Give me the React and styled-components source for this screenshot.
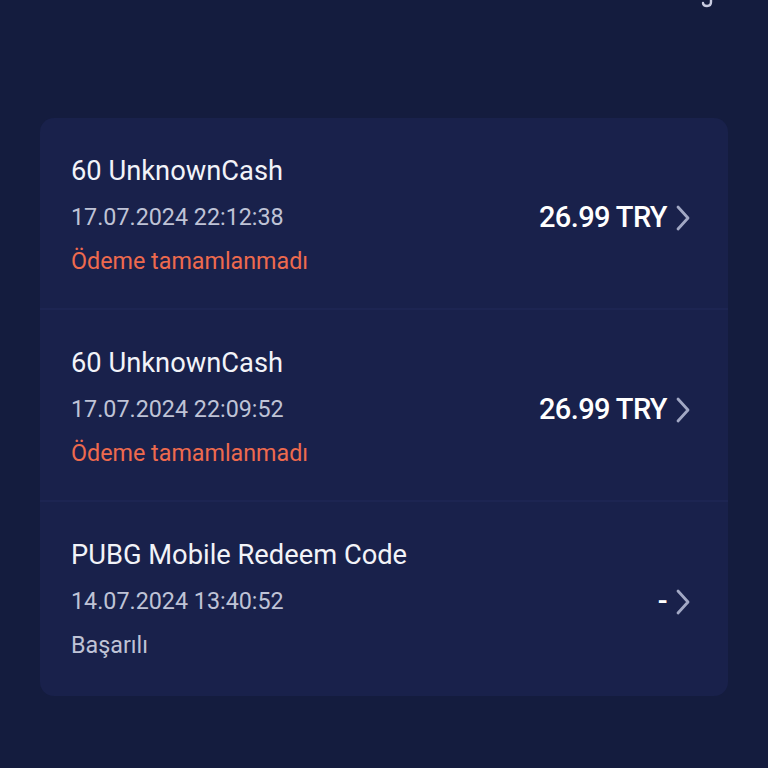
import styled, { createGlobalStyle } from "styled-components";

const Global = createGlobalStyle`
  html, body {
    margin: 0;
    padding: 0;
    background: #141c3e;
  }
  body {
    font-family: Roboto, "Noto Sans", sans-serif;
  }
`;

const Page = styled.div`
  width: 768px;
  height: 768px;
  overflow: hidden;
  background: #141c3e;
  display: flex;
  flex-direction: column;
`;

const Header = styled.div`
  height: 118px;
  display: flex;
  justify-content: flex-end;
  align-items: flex-start;
  padding-right: 54px;
`;

const HeaderIcon = styled.svg`
  margin-top: -14px;
`;

const Card = styled.div`
  margin: 0 40px;
  padding-bottom: 4px;
  background: #19214b;
  border-radius: 14px;
  overflow: hidden;
`;

const Row = styled.div`
  display: grid;
  grid-template-columns: 1fr auto;
  grid-template-rows: 46px 45px 44px;
  align-items: center;
  padding: 31px 37px 24px 31px;
  border-top: ${(p) => (p.$first ? "none" : "2px solid #1d2552")};
`;

const Title = styled.div`
  color: #f2f3f8;
  font-size: 27.3px;
  line-height: 1;
  grid-column: 1;
`;

const Date = styled.div`
  color: #bfc3d6;
  font-size: 23.3px;
  line-height: 1;
  grid-column: 1;
`;

const Status = styled.div`
  color: ${(p) => (p.$ok ? "#bfc3d6" : "#ee6a4e")};
  font-size: 23.3px;
  line-height: 1;
  grid-column: 1;
`;

const Side = styled.div`
  grid-column: 2;
  grid-row: 2;
  display: flex;
  align-items: center;
  gap: 8px;
`;

const Amount = styled.div`
  color: #ffffff;
  font-family: Roboto, sans-serif;
  font-weight: 500;
  font-size: 29px;
  letter-spacing: -0.6px;
  line-height: 1;
`;

const Chevron = () => (
  <svg width="16" height="28" viewBox="0 0 16 28">
    <path d="M3 3 L13 14 L3 25" fill="none" stroke="#a2a8c4" strokeWidth="2.8" strokeLinecap="round" strokeLinejoin="round" />
  </svg>
);

const orders = [
  { title: "60 UnknownCash", date: "17.07.2024 22:12:38", amount: "26.99 TRY", status: "Ödeme tamamlanmadı", ok: false },
  { title: "60 UnknownCash", date: "17.07.2024 22:09:52", amount: "26.99 TRY", status: "Ödeme tamamlanmadı", ok: false },
  { title: "PUBG Mobile Redeem Code", date: "14.07.2024 13:40:52", amount: "-", status: "Başarılı", ok: true },
];

export default function App() {
  return (
    <Page>
      <Global />
      <Header>
        <HeaderIcon width="14" height="22" viewBox="0 0 14 22">
          <path d="M11 4 L11 16 Q11 20 7 20 Q3 20 3 17" fill="none" stroke="#c8cbe0" strokeWidth="2.4" strokeLinecap="round" />
        </HeaderIcon>
      </Header>
      <Card>
        {orders.map((o, i) => (
          <Row key={i} $first={i === 0}>
            <Title>{o.title}</Title>
            <Date>{o.date}</Date>
            <Status $ok={o.ok}>{o.status}</Status>
            <Side>
              <Amount>{o.amount}</Amount>
              <Chevron />
            </Side>
          </Row>
        ))}
      </Card>
    </Page>
  );
}
